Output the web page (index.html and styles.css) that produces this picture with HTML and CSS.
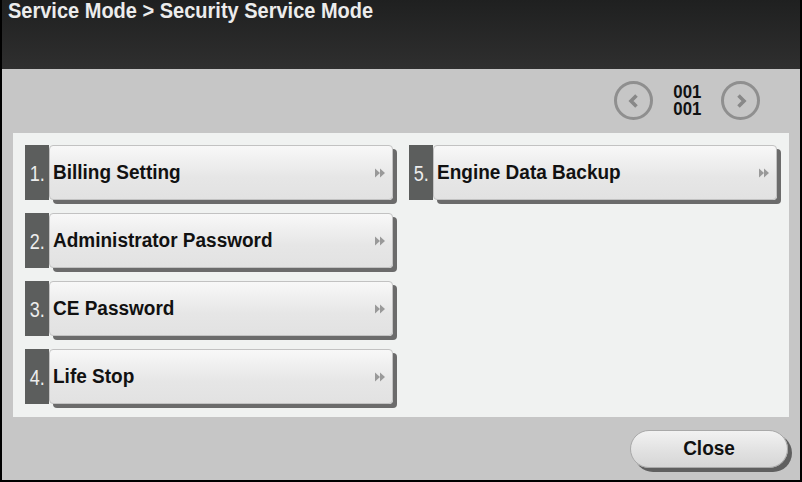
FILE: index.html
```html
<!DOCTYPE html>
<html>
<head>
<meta charset="utf-8">
<link rel="stylesheet" href="styles.css">
</head>
<body>
<div class="screen">
  <div class="header">
    <div class="title">Service Mode &gt; Security Service Mode</div>
  </div>
  <div class="main">
    <div class="pager">
      <div class="circle">
        <svg width="14" height="16" viewBox="0 0 14 16"><polyline points="9.5,2.5 4,8 9.5,13.5" fill="none" stroke="#888" stroke-width="3.6"/></svg>
      </div>
      <div class="count"><span>001</span><span>001</span></div>
      <div class="circle">
        <svg width="14" height="16" viewBox="0 0 14 16"><polyline points="4.5,2.5 10,8 4.5,13.5" fill="none" stroke="#888" stroke-width="3.6"/></svg>
      </div>
    </div>
    <div class="panel">
      <div class="item"><div class="num"><span>1.</span></div><div class="btn"><span class="label">Billing Setting</span><svg class="arr" width="10" height="10" viewBox="0 0 10 10"><polygon points="0,0.5 5,5 0,9.5"/><polygon points="5,0.5 10,5 5,9.5"/></svg></div></div>
      <div class="item"><div class="num"><span>2.</span></div><div class="btn"><span class="label">Administrator Password</span><svg class="arr" width="10" height="10" viewBox="0 0 10 10"><polygon points="0,0.5 5,5 0,9.5"/><polygon points="5,0.5 10,5 5,9.5"/></svg></div></div>
      <div class="item"><div class="num"><span>3.</span></div><div class="btn"><span class="label">CE Password</span><svg class="arr" width="10" height="10" viewBox="0 0 10 10"><polygon points="0,0.5 5,5 0,9.5"/><polygon points="5,0.5 10,5 5,9.5"/></svg></div></div>
      <div class="item"><div class="num"><span>4.</span></div><div class="btn"><span class="label">Life Stop</span><svg class="arr" width="10" height="10" viewBox="0 0 10 10"><polygon points="0,0.5 5,5 0,9.5"/><polygon points="5,0.5 10,5 5,9.5"/></svg></div></div>
      <div class="item"><div class="num"><span>5.</span></div><div class="btn"><span class="label">Engine Data Backup</span><svg class="arr" width="10" height="10" viewBox="0 0 10 10"><polygon points="0,0.5 5,5 0,9.5"/><polygon points="5,0.5 10,5 5,9.5"/></svg></div></div>
    </div>
    <div class="footer">
      <div class="close"><span>Close</span></div>
    </div>
  </div>
</div>
</body>
</html>
```
FILE: styles.css
```css
html, body {
  margin: 0;
  padding: 0;
  background: #000;
}
.screen {
  width: 802px;
  height: 482px;
  box-sizing: border-box;
  border: 2px solid #000;
  border-top: 0;
  background: #c6c6c6;
  display: flex;
  flex-direction: column;
  font-family: "Liberation Sans", Arial, sans-serif;
}
.header {
  height: 69px;
  background: linear-gradient(#1f2020, #2f2f2f);
  padding: 1px 0 0 6px;
  box-sizing: border-box;
}
.title {
  color: #ececec;
  font-size: 20px;
  font-weight: bold;
  line-height: 20px;
  transform: scaleY(1.06);
  transform-origin: 0 100%;
}
.main {
  padding: 0 11px;
  display: flex;
  flex-direction: column;
}
.pager {
  height: 64px;
  box-sizing: border-box;
  padding: 12px 29px 0 0;
  display: flex;
  justify-content: flex-end;
  align-items: flex-start;
}
.circle {
  width: 39px;
  height: 39px;
  box-sizing: border-box;
  border: 3px solid #8f8f8f;
  border-radius: 50%;
  display: flex;
  align-items: center;
  justify-content: center;
}
.count {
  display: flex;
  flex-direction: column;
  margin: 0 20px 0 21px;
  padding-top: 2px;
  font-size: 16px;
  font-weight: bold;
  line-height: 17px;
  color: #111;
}
.count span {
  display: block;
  transform: scale(1.05, 1.1);
}
.panel {
  height: 284px;
  box-sizing: border-box;
  background: #f0f2f1;
  padding: 12px 12px 13px 12px;
  display: grid;
  grid-template-columns: 368px 368px;
  grid-template-rows: repeat(4, 55px);
  grid-auto-flow: column;
  column-gap: 16px;
  row-gap: 13px;
}
.item {
  display: flex;
}
.num {
  width: 24px;
  height: 55px;
  background: #5c5e5d;
  color: #ededed;
  font-size: 22px;
  flex: none;
  display: flex;
  align-items: center;
  justify-content: center;
  padding-top: 2px;
  box-sizing: border-box;
}
.num span {
  display: inline-block;
  transform: scaleX(0.82);
}
.btn {
  width: 344px;
  height: 55px;
  box-sizing: border-box;
  border: 1px solid #c2c2c2;
  border-radius: 4px;
  background: linear-gradient(#f8f8f8, #e6e6e6 60%, #e2e2e2);
  box-shadow: 4px 4px 0 #6b6b6b;
  display: flex;
  align-items: center;
  padding: 0 7px 0 3px;
}
.label {
  flex: 1;
  font-size: 19px;
  font-weight: bold;
  color: #111;
  transform: scaleY(1.08);
}
.arr {
  fill: #999;
  margin-top: 1px;
}
.footer {
  display: flex;
  justify-content: flex-end;
  padding-top: 13px;
  padding-right: 1px;
}
.close {
  width: 158px;
  height: 38px;
  box-sizing: border-box;
  border: 1px solid #a9a9a9;
  border-radius: 19px;
  background: linear-gradient(#f2f2f2, #e0e0e0 60%, #d6d6d6);
  box-shadow: 4px 4px 0 #5f5f5f;
  font-size: 19px;
  font-weight: bold;
  color: #111;
  display: flex;
  align-items: center;
  justify-content: center;
}
.close span {
  display: inline-block;
  transform: scaleY(1.08);
}
```
